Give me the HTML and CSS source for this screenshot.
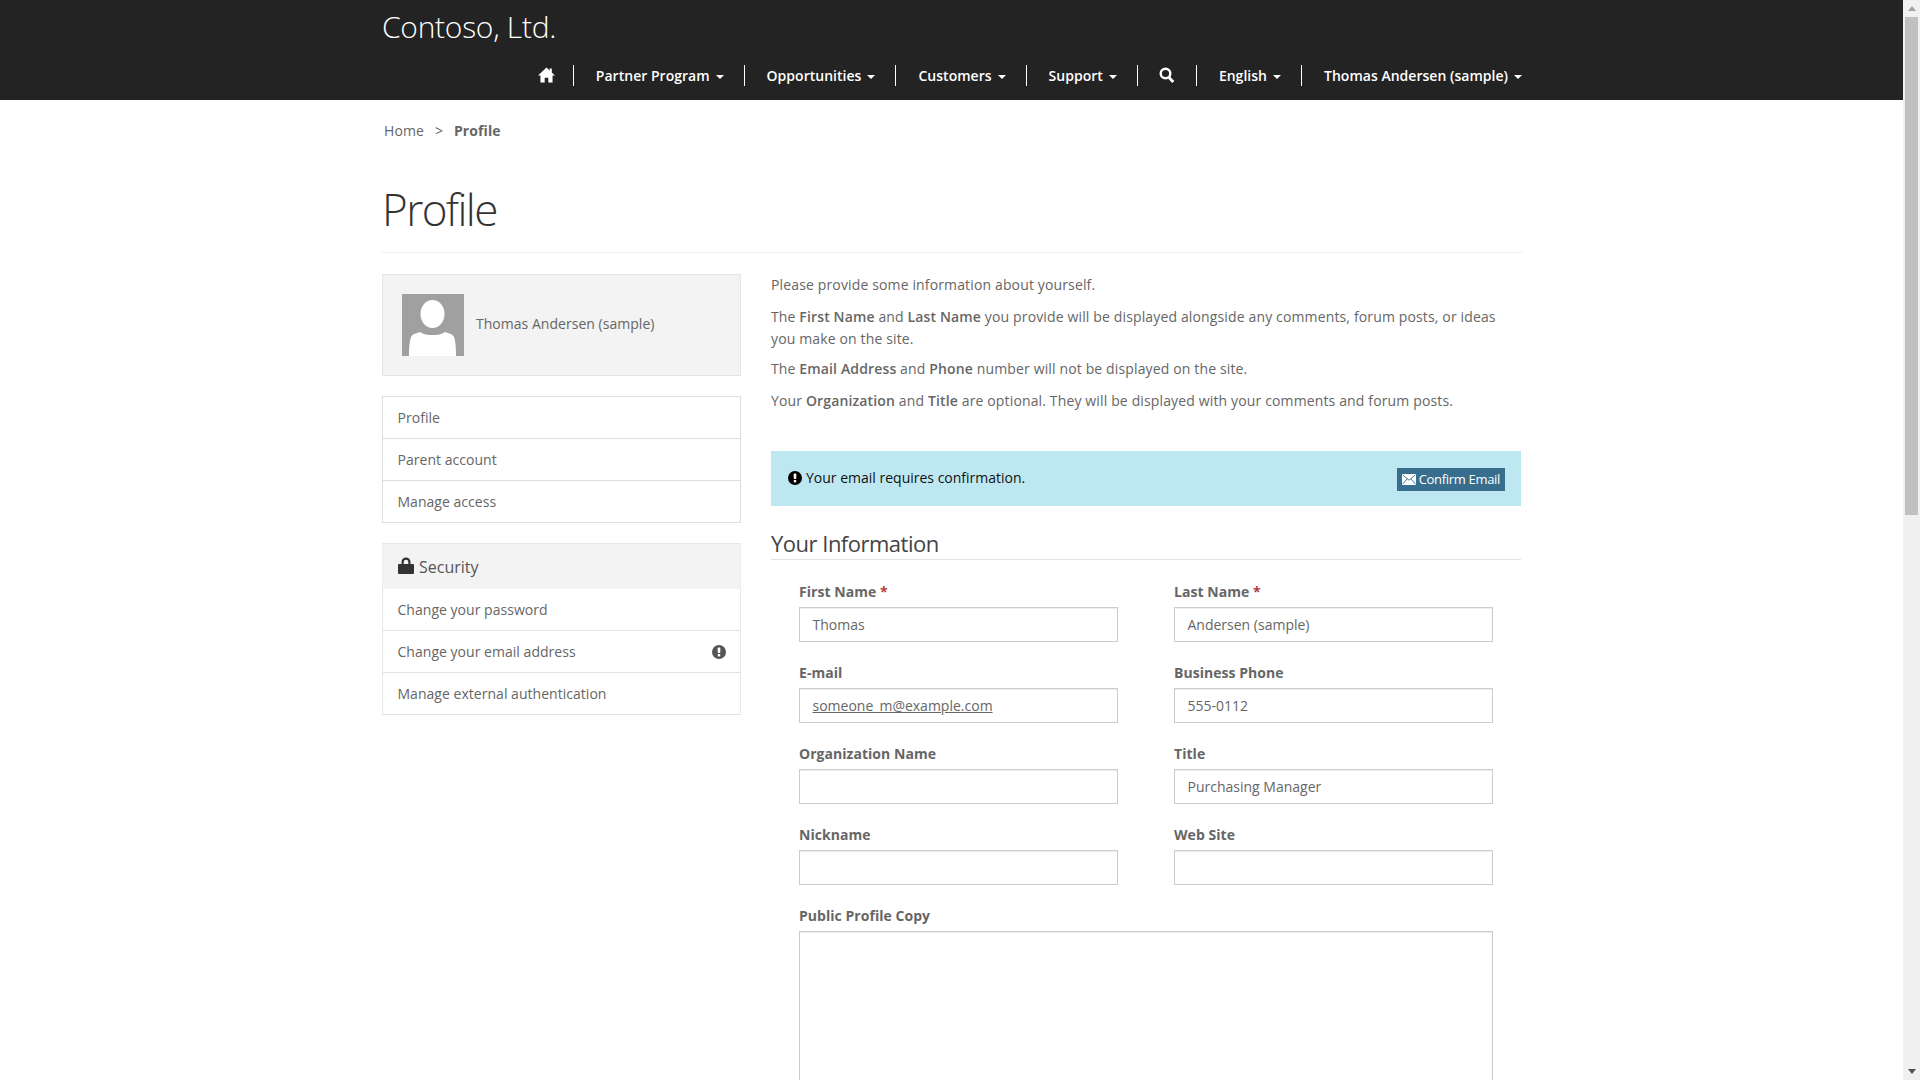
FILE: index.html
```html
<!DOCTYPE html>
<html lang="en">
<head>
<meta charset="utf-8">
<title>Profile</title>
<link rel="stylesheet" href="styles.css">
</head>
<body>
<div class="app">
<div class="page">
  <header class="topbar">
    <div class="container">
      <div class="brand">Contoso, Ltd.</div>
      <nav class="nav">
        <a class="nav-item icon-item home-item"><svg class="ico-home" viewBox="0 0 16 15"><path d="M8 .5 0 8h2.300v6.500h4V10h3.400v4.500h4V8H16l-3-2.800V1.300h-2v2z" fill="#fff"/></svg></a>
        <a class="nav-item">Partner Program<i class="caret"></i></a>
        <a class="nav-item">Opportunities<i class="caret"></i></a>
        <a class="nav-item">Customers<i class="caret"></i></a>
        <a class="nav-item">Support<i class="caret"></i></a>
        <a class="nav-item icon-item"><svg class="ico-search" viewBox="0 0 16 16"><circle cx="6.500" cy="6.500" r="4.800" fill="none" stroke="#fff" stroke-width="2.400"/><path d="m10 10.500 4.300 4.500" stroke="#fff" stroke-width="2.800"/></svg></a>
        <a class="nav-item">English<i class="caret"></i></a>
        <a class="nav-item last">Thomas Andersen (sample)<i class="caret"></i></a>
      </nav>
    </div>
  </header>
  <main class="container">
    <div class="crumbs"><a>Home</a><span class="sep">&gt;</span><b>Profile</b></div>
    <h1 class="title">Profile</h1>
    <div class="columns">
      <aside class="side">
        <div class="user-card">
          <svg class="avatar" viewBox="0 0 62 62"><rect width="62" height="62" fill="#a0a0a0"/><ellipse cx="30.500" cy="20" rx="12" ry="14" fill="#fff"/><path d="M7 62c0-8 .5-15 2-19 1.500-3 6-4 9-5 3 1 3 3 12.500 3S40 39 43 38c3 1 7.500 2 9 5 1.500 4 2 11 2 19z" fill="#fff"/></svg>
          <span class="user-name">Thomas Andersen (sample)</span>
        </div>
        <ul class="list">
          <li>Profile</li>
          <li>Parent account</li>
          <li>Manage access</li>
        </ul>
        <div class="sec">
          <div class="sec-head"><svg class="ico-lock" viewBox="0 0 16 17"><path d="M3.500 7V5a4.500 4.500 0 0 1 9 0v2h-2.200V5a2.300 2.300 0 0 0-4.600 0v2z" fill="#333"/><rect y="7" width="16" height="10" rx="1" fill="#333"/></svg>Security</div>
          <ul class="list sec-list">
            <li>Change your password</li>
            <li class="split">Change your email address<svg class="ico-alert" viewBox="0 0 14 14"><circle cx="7" cy="7" r="7" fill="#555"/><rect x="5.700" y="2.500" width="2.600" height="5.500" rx=".8" fill="#fff"/><rect x="5.800" y="9" width="2.400" height="2.400" fill="#fff"/></svg></li>
            <li>Manage external authentication</li>
          </ul>
        </div>
      </aside>
      <section class="content">
        <p class="p1">Please provide some information about yourself.</p>
        <p class="p2">The <b>First Name</b> and <b>Last Name</b> you provide will be displayed alongside any comments, forum posts, or ideas you make on the site.</p>
        <p class="p3">The <b>Email Address</b> and <b>Phone</b> number will not be displayed on the site.</p>
        <p>Your <b>Organization</b> and <b>Title</b> are optional. They will be displayed with your comments and forum posts.</p>
        <div class="alert">
          <span class="alert-text"><svg class="ico-alert dark" viewBox="0 0 14 14"><circle cx="7" cy="7" r="7" fill="#000"/><rect x="5.700" y="2.500" width="2.600" height="5.500" rx=".8" fill="#fff"/><rect x="5.800" y="9" width="2.400" height="2.400" fill="#fff"/></svg>Your email requires confirmation.</span>
          <a class="btn"><svg class="ico-mail" viewBox="0 0 14 11"><path d="M0 0h14v11H0z" fill="#fff"/><path d="m.5.800 6.500 5.400L13.500.800M.5 10.300l4.600-5.400M13.500 10.300 8.900 4.900" fill="none" stroke="#376e8e" stroke-width=".9"/></svg>Confirm Email</a>
        </div>
        <h2 class="section">Your Information</h2>
        <form class="form">
          <div class="field"><label>First Name <em>*</em></label><div class="input">Thomas</div></div>
          <div class="field"><label>Last Name <em>*</em></label><div class="input">Andersen (sample)</div></div>
          <div class="field"><label>E-mail</label><div class="input"><u>someone_m@example.com</u></div></div>
          <div class="field"><label>Business Phone</label><div class="input">555-0112</div></div>
          <div class="field"><label>Organization Name</label><div class="input"></div></div>
          <div class="field"><label>Title</label><div class="input">Purchasing Manager</div></div>
          <div class="field"><label>Nickname</label><div class="input"></div></div>
          <div class="field"><label>Web Site</label><div class="input"></div></div>
          <div class="field wide"><label>Public Profile Copy</label><div class="input area"></div></div>
        </form>
      </section>
    </div>
  </main>
</div>
<div class="scrollbar">
  <div class="arrow up"></div>
  <div class="thumb"></div>
  <div class="arrow down"></div>
</div>
</div>
</body>
</html>
```
FILE: styles.css
```css
* { box-sizing: border-box; }
html, body { margin: 0; height: 100%; overflow: hidden; }
body { font-family: "Open Sans", "Noto Sans", sans-serif; font-size: 14px; color: #666; background: #fff; letter-spacing: 0; }
.app { display: flex; height: 100vh; }
.page { flex: 1; min-width: 0; overflow: hidden; }
.container { width: 1140px; margin-left: 382px; }
.topbar { background: #232323; height: 100px; }
.brand { color: #fff; font-size: 30px; font-weight: 300; line-height: 54px; letter-spacing: -.28px; }
.nav { display: flex; justify-content: flex-end; align-items: center; margin-top: 11px; height: 21px; }
.nav-item { color: #fff; font-weight: 600; padding: 0 20px 0 22px; border-right: 1px solid #fff; height: 21px; line-height: 20px; display: flex; align-items: center; white-space: nowrap; letter-spacing: .02px; }
.nav-item.last { border-right: 0; padding-right: 0; }
.icon-item { padding: 0 21px; }
.home-item { padding-right: 18px; }
.caret { display: inline-block; margin-left: 6px; border-top: 4px solid #fff; border-left: 4px solid transparent; border-right: 4px solid transparent; margin-top: 2px; }
.ico-home { width: 17px; height: 16px; margin-top: -2px; }
.ico-search { width: 16px; height: 16px; margin-top: -2px; }
.crumbs { margin: 21px 0 0 2px; line-height: 20px; letter-spacing: .08px; }
.sep { margin: 0 11px; }
.crumbs b { font-weight: 700; }
.title { font-size: 44px; font-weight: 300; color: #333; margin: 37px 0 0 -1px; line-height: 62px; padding: 0 0 12px 1px; border-bottom: 1px solid #eee; letter-spacing: -1.6px; }
.columns { display: flex; gap: 30px; margin-top: 21px; }
.side { width: 359px; flex: none; }
.user-card { background: #f3f3f3; border: 1px solid #e5e5e5; height: 102px; padding: 19px; display: flex; align-items: center; gap: 12px; }
.avatar { width: 62px; height: 62px; }
.user-name { margin-top: -3px; letter-spacing: .03px; }
.list { list-style: none; margin: 20px 0 0; padding: 0; border: 1px solid #ddd; border-bottom: 0; }
.list li { height: 42px; line-height: 41px; padding: 0 14.500px; border-bottom: 1px solid #ddd; letter-spacing: .03px; }
.sec { margin-top: 20px; border: 1px solid #e8e8e8; border-width: 1px 0 0; }
.sec-head { background: #f3f3f3; height: 45px; font-size: 16px; padding: 0 15px; display: flex; align-items: center; gap: 5px; color: #555; border: 1px solid #eee; border-width: 0 1px; }
.ico-lock { width: 16px; height: 17px; margin-top: -3px; }
.sec-list { margin: 0; border-color: #e8e8e8; border-top: 0; }
.sec-list li { border-color: #e2e2e2; }
.split { display: flex; justify-content: space-between; align-items: center; }
.ico-alert { width: 14px; height: 14px; }
.content { width: 751px; }
.content p { margin: 0 0 9px; line-height: 22px; letter-spacing: .14px; max-width: 745px; }
.content p.p1 { margin-bottom: 10px; }
.content p.p2 { margin-bottom: 8px; }
.content p.p3 { margin-bottom: 10px; }
.content b { font-weight: 600; }
.alert { margin-top: 39px; background: #bde8f1; height: 55px; width: 750px; padding: 17px 16px 0 17px; display: flex; justify-content: space-between; align-items: flex-start; color: #111; }
.alert-text { display: flex; align-items: center; gap: 4px; line-height: 20px; }
.btn { background: #376e8e; color: #fff; font-size: 13px; height: 23px; line-height: 23px; padding: 0 5px; display: flex; align-items: center; gap: 3px; letter-spacing: -.32px; }
.ico-mail { width: 14px; height: 11px; }
.section { font-size: 22px; font-weight: 400; color: #444; margin: 22px 0 0; line-height: 31px; height: 32px; width: 750px; border-bottom: 1px solid #e2e2e2; letter-spacing: -.5px; }
.form { display: grid; grid-template-columns: 319px 319px; column-gap: 56px; row-gap: 21px; padding: 22px 0 0 28px; }
.field label { display: block; font-weight: 700; line-height: 20px; height: 25px; letter-spacing: .04px; }
.field em { color: #b04040; font-style: normal; }
.input { height: 35px; border: 1px solid #ccc; box-shadow: inset 0 1px 1px rgba(0,0,0,.075); padding: 0 12.500px; line-height: 34px; }
.wide { grid-column: 1 / 3; }
.area { height: 300px; }
.scrollbar { width: 17px; flex: none; background: #f0f0f0; display: flex; flex-direction: column; align-items: center; height: 100vh; }
.arrow { height: 17px; width: 17px; flex: none; position: relative; }
.arrow::after { content: ""; position: absolute; left: 5px; top: 6px; border-left: 4px solid transparent; border-right: 4px solid transparent; }
.up::after { border-bottom: 5px solid #a3a3a3; }
.down::after { border-top: 5px solid #505050; }
.thumb { width: 13px; height: 498px; background: #c0c0c0; flex: none; }
.down { margin-top: auto; }
```
